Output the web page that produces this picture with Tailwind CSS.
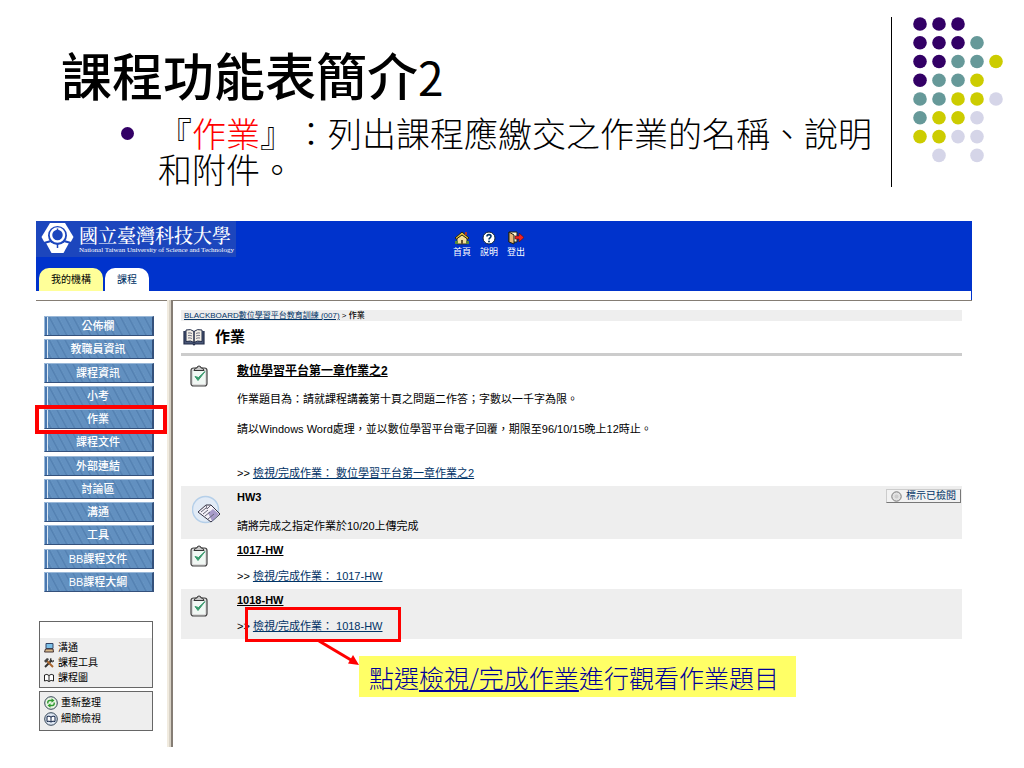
<!DOCTYPE html>
<html lang="zh-Hant">
<head>
<meta charset="utf-8">
<meta name="viewport" content="width=device-width, initial-scale=1">
<title>課程功能表簡介2</title>
<script src="https://cdn.jsdelivr.net/npm/@tailwindcss/browser@4"></script>
</head>
<body class="bg-white text-black font-['Liberation_Sans','Noto_Sans_CJK_TC',sans-serif]">

<svg class="hidden" aria-hidden="true">
  <symbol id="clipboard" viewBox="0 0 18 22">
    <rect x="1" y="3" width="16" height="18" rx="2.5" fill="#dcdcdc" stroke="#444" stroke-width="1.2"/>
    <rect x="3" y="6" width="12" height="13" fill="#f1f8f4"/>
    <path d="M4 5.500h10L12.500 3H11a2 2 0 0 0-4 0H5.500z" fill="#c9c9c9" stroke="#333"/>
    <path d="M5 11.500l3 4L15 6.500 8.500 12.500z" fill="#3a9a6e" stroke="#3a9a6e" stroke-linejoin="round"/>
  </symbol>
  <symbol id="book" viewBox="0 0 22 18">
    <path d="M1 3v13h9l1 1 1-1h9V3" fill="#4a5878" stroke="#222c48" stroke-width="1.200"/>
    <path d="M3 2q5-1.500 8 1.500v11Q8 12 3 13.500zM19 2q-5-1.500-8 1.500v11q3-2.500 8-1z" fill="#f3efe6" stroke="#222c48"/>
    <path d="M5 5q2-.5 4 .5M5 7.500q2-.5 4 .5M5 10q2-.5 4 .5M17 5q-2-.5-4 .5M17 7.500q-2-.5-4 .5M17 10q-2-.5-4 .5" fill="none" stroke="#778"/>
  </symbol>
</svg>

<header class="flex pt-[17px]">
  <div class="min-w-0 flex-1 border-r border-black">
    <h1 class="ml-[61px] mt-[24px] text-[51px] leading-[66px] font-medium font-['Noto_Sans_CJK_TC',sans-serif]">課程功能表簡介<span class="text-[46px] leading-none font-normal">2</span></h1>
    <div class="ml-[121px] mt-[8px] flex gap-6">
      <span class="mt-[12px] size-[13px] shrink-0 rounded-full bg-[#330066]"></span>
      <p class="text-[34px] leading-[36px] font-light font-['Noto_Sans_CJK_TC',sans-serif] [text-spacing-trim:space-all]">『<span class="text-[#ff0000]">作業</span>』：列出課程應繳交之作業的名稱、說明和附件。</p>
    </div>
  </div>
  <svg class="ml-[21px] mr-[19px] h-[148px] w-[92px] shrink-0" viewBox="0 0 92 148" aria-hidden="true">
    <g fill="#330066"><circle cx="7" cy="7" r="6.800"/><circle cx="26" cy="7" r="6.800"/><circle cx="45" cy="7" r="6.800"/><circle cx="7" cy="25.700" r="6.800"/><circle cx="26" cy="25.700" r="6.800"/><circle cx="45" cy="25.700" r="6.800"/><circle cx="7" cy="44.500" r="6.800"/><circle cx="26" cy="44.500" r="6.800"/><circle cx="7" cy="63.300" r="6.800"/></g>
    <g fill="#669999"><circle cx="64" cy="25.700" r="6.800"/><circle cx="45" cy="44.500" r="6.800"/><circle cx="64" cy="44.500" r="6.800"/><circle cx="26" cy="63.300" r="6.800"/><circle cx="45" cy="63.300" r="6.800"/><circle cx="7" cy="82" r="6.800"/><circle cx="26" cy="82" r="6.800"/><circle cx="7" cy="100.800" r="6.800"/></g>
    <g fill="#cccc00"><circle cx="83" cy="44.500" r="6.800"/><circle cx="64" cy="63.300" r="6.800"/><circle cx="45" cy="82" r="6.800"/><circle cx="64" cy="82" r="6.800"/><circle cx="26" cy="100.800" r="6.800"/><circle cx="45" cy="100.800" r="6.800"/><circle cx="7" cy="119.600" r="6.800"/><circle cx="26" cy="119.600" r="6.800"/></g>
    <g fill="#d5d5e8"><circle cx="83" cy="82" r="6.800"/><circle cx="64" cy="100.800" r="6.800"/><circle cx="45" cy="119.600" r="6.800"/><circle cx="64" cy="119.600" r="6.800"/><circle cx="26" cy="138.400" r="6.800"/><circle cx="64" cy="138.400" r="6.800"/></g>
  </svg>
</header>

<div class="ml-9 mr-[52px] mt-[34px] mb-5">
  <div class="border-r border-[#0033cc] pb-[9px]">
    <div class="flex h-[70px] bg-[#0033cc]">
      <div class="flex w-[417px] shrink-0 flex-col justify-between">
        <div class="flex h-9 w-[200px] items-center gap-1 bg-[#1c46bd] pl-1 text-white">
          <svg class="h-9 w-[35px] shrink-0" viewBox="0 0 35 36" aria-hidden="true">
            <path d="M10 2h15l8.500 14-3 5.500H4.500l-3-5.500z" fill="#fff"/>
            <path d="M6 22l11.500-3L29 22l-5.500 10h-12z" fill="#fff"/>
            <circle cx="17.500" cy="14.500" r="9.500" fill="#1c46bd"/>
            <path d="M11 20L4 22M24 20l7 2" stroke="#1c46bd" stroke-width="2"/>
            <circle cx="17.500" cy="14" r="6.500" fill="#1c46bd" stroke="#fff" stroke-width="2.500"/>
            <path d="M17.500 7.500v7M17.500 23v4" stroke="#1c46bd" stroke-width="1.500"/>
          </svg>
          <div class="whitespace-nowrap">
            <div class="text-[19px] leading-[22px] font-medium font-['Noto_Serif_CJK_TC','Noto_Sans_CJK_TC',serif]">國立臺灣科技大學</div>
            <div class="text-[7px] leading-[9px] font-['Liberation_Serif',serif]">National Taiwan University of Science and Technology</div>
          </div>
        </div>
        <nav class="flex gap-0.5 pl-[3px] text-[10px] leading-[23px]">
          <a href="#" class="rounded-t-[10px] bg-[#ffff99] px-3">我的機構</a>
          <a href="#" class="rounded-t-[10px] bg-white px-3 text-[#003366]">課程</a>
        </nav>
      </div>
      <nav class="flex items-start gap-[9px] pt-[10px] text-[9px] leading-[14px] text-white">
        <a href="#" class="flex flex-col items-center">
          <svg class="h-[14px] w-4" viewBox="0 0 16 14" aria-hidden="true"><path d="M3 7v6h10V7L8 3z" fill="#f3df9a" stroke="#332"/><path d="M1 7l7-6 7 6-1.500 1L8 4 2.500 8z" fill="#e3c23c" stroke="#221"/><path d="M7 9h2v4H7z" fill="#653"/><path d="M11 1h2v3h-2z" fill="#a33"/><path d="M1 10h3v3H1zM12 10h3v3h-3z" fill="#5a8a3a"/></svg>首頁</a>
        <a href="#" class="flex flex-col items-center">
          <svg class="h-[14px] w-4" viewBox="0 0 16 14" aria-hidden="true"><circle cx="8" cy="7" r="6" fill="#fff" stroke="#123"/><path d="M6 5.500C6 3 10 3 10 5.300 10 6.800 8 6.800 8 8.500" fill="none" stroke="#036" stroke-width="1.600"/><circle cx="8" cy="10.600" r="1" fill="#036"/></svg>說明</a>
        <a href="#" class="flex flex-col items-center">
          <svg class="h-[14px] w-4" viewBox="0 0 16 14" aria-hidden="true"><path d="M1 1h8v10H1z" fill="#fdf8d8" stroke="#221"/><path d="M1 1l5 3v9l-5-2z" fill="#e8b878" stroke="#221"/><path d="M7 5h4V2l5 4.500-5 4.500V8H7z" fill="#e22" stroke="#511" stroke-width=".6"/></svg>登出</a>
      </nav>
    </div>
  </div>

  <div class="flex">
    <aside class="w-[131px] shrink-0 border-t border-[#857d74] pt-[15px]">
      <ul class="ml-2 flex h-[276px] w-[110px] flex-col justify-between text-[11px] font-medium leading-[18px] text-white [&_a]:block [&_a]:h-5 [&_a]:pr-px [&_a]:text-center [&_a]:border [&_a]:border-t-[#9ab8d8] [&_a]:border-l-[#9ab8d8] [&_a]:border-r-2 [&_a]:border-r-[#34517c] [&_a]:border-b-[#34517c] [&_a]:shadow-[inset_2px_0_0_#4a78b0,inset_3px_0_0_#dce8f4] [&_a]:bg-[repeating-linear-gradient(62deg,#6290c0_0px,#6290c0_4px,#527fb0_5px,#6896c4_7px)]">
        <li><a href="#">公佈欄</a></li>
        <li><a href="#">教職員資訊</a></li>
        <li><a href="#">課程資訊</a></li>
        <li><a href="#">小考</a></li>
        <li class="relative"><a href="#">作業</a><span class="pointer-events-none absolute -top-1 -right-[13px] -bottom-[5px] -left-[9px] z-10 border-4 border-[#ff0000]"></span></li>
        <li><a href="#">課程文件</a></li>
        <li><a href="#">外部連結</a></li>
        <li><a href="#">討論區</a></li>
        <li><a href="#">溝通</a></li>
        <li><a href="#">工具</a></li>
        <li><a href="#">BB課程文件</a></li>
        <li><a href="#">BB課程大綱</a></li>
      </ul>
      <div class="ml-[3px] mt-[29px] w-[114px] border border-[#666] bg-[#eee] pb-0.5 text-[10px] leading-[15px]">
        <div class="mb-0.5 h-4 bg-white"></div>
        <a href="#" class="flex items-center gap-1 pl-1"><svg class="size-[10px]" viewBox="0 0 10 10" aria-hidden="true"><path d="M2 .5h7v5H2z" fill="#7cc0e8" stroke="#346"/><path d="M1.500 6h7.500l.5 3H.5z" fill="#d8b98a" stroke="#433"/></svg>溝通</a>
        <a href="#" class="flex items-center gap-1 pl-1"><svg class="size-[10px]" viewBox="0 0 10 10" aria-hidden="true"><path d="M1 9l7-7" stroke="#333" stroke-width="2"/><path d="M2 2l7 7" stroke="#a8642c" stroke-width="2"/><path d="M0 3l3-3 2 1-3 4z" fill="#444"/><path d="M7 0L6 3l3 1 1-2" fill="none" stroke="#333"/></svg>課程工具</a>
        <a href="#" class="flex items-center gap-1 pl-1"><svg class="size-[10px]" viewBox="0 0 10 10" aria-hidden="true"><path d="M.5 2Q3 .5 5 2.500 7 .5 9.500 2v6Q7 6.500 5 8.500 3 6.500.5 8zM5 2.500v6" fill="#fff" stroke="#222"/></svg>課程圖</a>
      </div>
      <div class="ml-[3px] mt-[3px] w-[114px] border border-[#666] bg-[#eee] py-[3px] text-[10px] leading-[16px]">
        <a href="#" class="flex items-center gap-[3px] pl-1"><svg class="size-[14px]" viewBox="0 0 14 14" aria-hidden="true"><circle cx="7" cy="7" r="6.300" fill="#e9f5e4" stroke="#345"/><path d="M3.800 7.500V6.500a2 2 0 0 1 2-2H8M10.200 6.500v1a2 2 0 0 1-2 2H6" fill="none" stroke="#2f9a2f" stroke-width="1.400"/><path d="M7.500 2.300l3 2.200-3 2.200zM6.500 7.300l-3 2.200 3 2.200z" fill="#2f9a2f"/></svg>重新整理</a>
        <a href="#" class="flex items-center gap-[3px] pl-1"><svg class="size-[14px]" viewBox="0 0 14 14" aria-hidden="true"><circle cx="7" cy="7" r="6.300" fill="#dde6f2" stroke="#345"/><path d="M3 4.500q2-1 4 .5 2-1.500 4-.5v5q-2-1-4 .5-2-1.500-4-.5zM7 5v5" fill="#fff" stroke="#124"/></svg>細節檢視</a>
      </div>
    </aside>
    <div class="w-1 shrink-0 border-l-2 border-[#f1ebdf] bg-[#d8d2c6]"></div>

    <main class="min-h-[447px] min-w-0 flex-1 border-t border-l-2 border-[#857d74] pr-[10px] pl-2">
      <div class="mt-[9px] h-[11px] bg-[#eee] pl-[3px] text-[8px] leading-[11px]"><a href="#" class="text-[#003366] underline">BLACKBOARD數位學習平台教育訓練 (007)</a> &gt; <b class="font-medium">作業</b></div>
      <div class="flex h-[35px] items-center gap-[10px] border-b-[3px] border-[#ccc] pl-[2px]">
        <svg class="h-[18px] w-[22px]"><use href="#book"/></svg>
        <h2 class="text-[15px] leading-5 font-bold">作業</h2>
      </div>

      <section class="flex pt-[7px] pb-[5px] text-[11px] leading-4">
        <div class="w-14 shrink-0 pl-[9px] pt-0.5"><svg class="h-[22px] w-[18px]"><use href="#clipboard"/></svg></div>
        <div>
          <h3 class="text-[12px] font-bold underline">數位學習平台第一章作業之2</h3>
          <p class="mt-3">作業題目為：請就課程講義第十頁之問題二作答；字數以一千字為限。</p>
          <p class="mt-[14px]">請以Windows Word處理，並以數位學習平台電子回覆，期限至96/10/15晚上12時止。</p>
          <p class="mt-7">&gt;&gt; <a href="#" class="text-[#003366] underline">檢視/完成作業： 數位學習平台第一章作業之2</a></p>
        </div>
      </section>

      <section class="flex bg-[#eee] pt-[3px] pb-[5px] text-[11px] leading-4">
        <div class="w-14 shrink-0 pl-[11px] pt-[6px]">
          <svg class="h-[30px] w-[29px]" viewBox="0 0 29 30" aria-hidden="true"><circle cx="13.500" cy="14.500" r="13" fill="#e2ebf6" stroke="#b5cfe9" stroke-width="1.500"/><path d="M6 17l8-7 5 0 9 9-9 8z" fill="#f4f1f8" stroke="#334"/><path d="M16 18l5-4 6 5-7 7z" fill="#a79bc9"/><path d="M14 10l1 4 4-4M9 17l5-4M11 19l5-4M13 21l5-4M16 24l6-5" fill="none" stroke="#667"/></svg>
        </div>
        <div class="flex-1">
          <h3 class="font-bold">HW3</h3>
          <p class="mt-[13px]">請將完成之指定作業於10/20上傳完成</p>
        </div>
        <button type="button" class="mr-px flex h-[14px] items-center gap-1 border border-t-[#ccc] border-l-[#ccc] border-r-[#777] border-b-[#777] bg-[#f2f2f2] pr-1 pl-1 text-[10px] leading-3 text-[#003366]"><svg class="size-[11px]" viewBox="0 0 11 11" aria-hidden="true"><circle cx="5.500" cy="5.500" r="4.700" fill="#e2e2e2" stroke="#777"/><circle cx="5.500" cy="5.500" r="2" fill="#ccc"/></svg>標示已檢閱</button>
      </section>

      <section class="flex pt-[3px] pb-[5px] text-[11px] leading-4">
        <div class="w-14 shrink-0 pl-[9px] pt-[3px]"><svg class="h-[22px] w-[18px]"><use href="#clipboard"/></svg></div>
        <div>
          <h3 class="font-bold underline">1017-HW</h3>
          <p class="mt-[10px]">&gt;&gt; <a href="#" class="text-[#003366] underline">檢視/完成作業： 1017-HW</a></p>
        </div>
      </section>

      <section class="flex bg-[#eee] pt-[3px] pb-[5px] text-[11px] leading-4">
        <div class="w-14 shrink-0 pl-[9px] pt-[3px]"><svg class="h-[22px] w-[18px]"><use href="#clipboard"/></svg></div>
        <div>
          <h3 class="font-bold underline">1018-HW</h3>
          <div class="relative mt-[10px]">
            <p>&gt;&gt; <a href="#" class="text-[#003366] underline">檢視/完成作業： 1018-HW</a></p>
            <span class="pointer-events-none absolute -top-[11px] left-2 h-[35px] w-[156px] border-3 border-[#ff0000]"></span>
            <p class="absolute top-[38px] left-[122px] bg-[#ffff66] pt-[2px] pr-[17px] pl-[10px] text-[25px] leading-[39px] font-light whitespace-nowrap text-[#000099] font-['Noto_Sans_CJK_TC',sans-serif]">點選<span class="underline">檢視/完成作業</span>進行觀看作業題目</p>
            <svg class="absolute top-[22px] left-[80px] h-7 w-[44px]" viewBox="0 0 44 28" aria-hidden="true"><path d="M2 1l32 19" stroke="#ff0000" stroke-width="3"/><path d="M42 25l-11-1.500 5-8.500z" fill="#ff0000"/></svg>
          </div>
        </div>
      </section>
    </main>
  </div>
</div>
</body>
</html>
